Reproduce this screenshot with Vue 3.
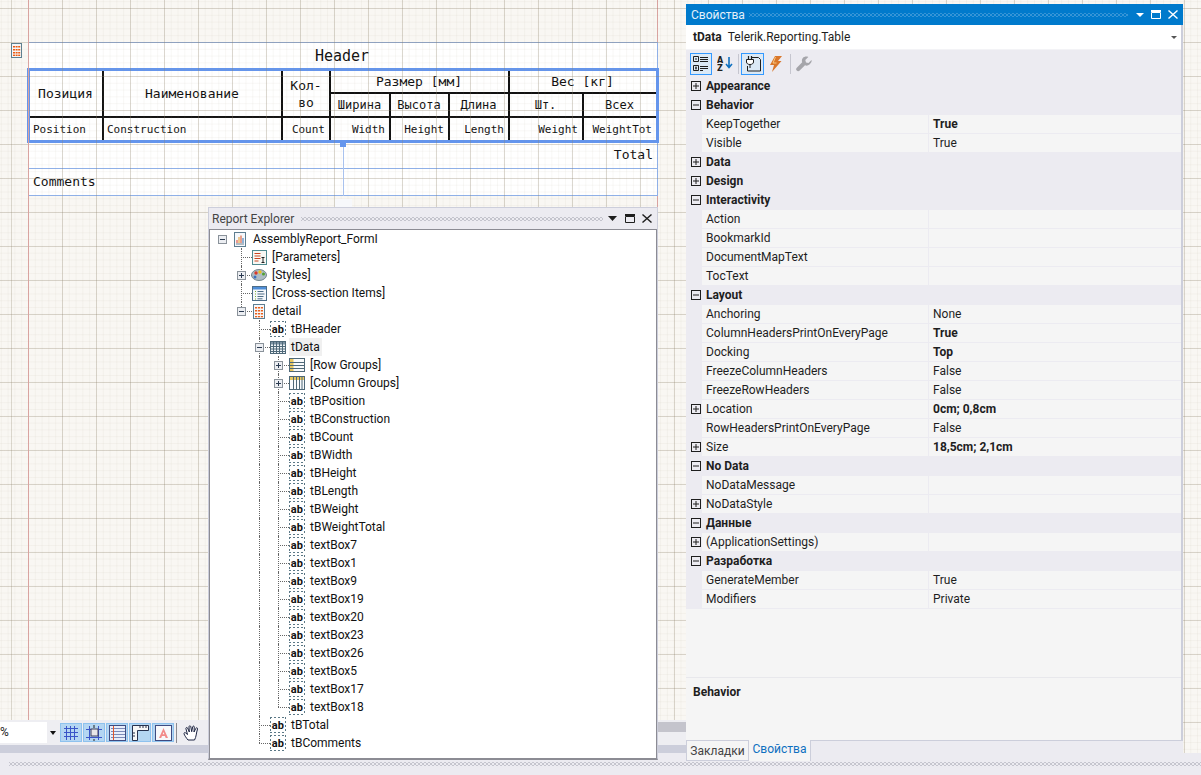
<script setup>
const names = ['tBPosition','tBConstruction','tBCount','tBWidth','tBHeight','tBLength','tBWeight','tBWeightTotal','textBox7','textBox1','textBox9','textBox19','textBox20','textBox23','textBox26','textBox5','textBox17','textBox18']
const base = [
  { label: 'AssemblyReport_FormI', level: 0, box: '-', icon: 'report' },
  { label: '[Parameters]', level: 1, icon: 'params' },
  { label: '[Styles]', level: 1, box: '+', icon: 'palette' },
  { label: '[Cross-section Items]', level: 1, icon: 'cross' },
  { label: 'detail', level: 1, box: '-', icon: 'detail' },
  { label: 'tBHeader', level: 2, icon: 'ab' },
  { label: 'tData', level: 2, box: '-', icon: 'table', hover: true },
  { label: '[Row Groups]', level: 3, box: '+', icon: 'rows' },
  { label: '[Column Groups]', level: 3, box: '+', icon: 'cols' },
  ...names.map(label => ({ label, level: 3, icon: 'ab' })),
  { label: 'tBTotal', level: 2, icon: 'ab' },
  { label: 'tBComments', level: 2, icon: 'ab' }
]
const railX = [12, 31, 49, 68]
const iconOffset = [12, 10, 11, 11]
const labelOffset = [29, 29, 30, 30]
const spans = [{ l: 1, from: 1, to: 4 }, { l: 2, from: 5, to: 28 }, { l: 3, from: 7, to: 26 }]
const tree = base.map((n, i) => ({
  ...n,
  rails: spans.filter(s => i >= s.from && i <= s.to).map(s => ({ x: railX[s.l], half: i === s.to }))
}))

const props = [
  { t: 'cat', n: 'Appearance', box: '+' },
  { t: 'cat', n: 'Behavior', box: '-' },
  { n: 'KeepTogether', v: 'True', b: true },
  { n: 'Visible', v: 'True' },
  { t: 'cat', n: 'Data', box: '+' },
  { t: 'cat', n: 'Design', box: '+' },
  { t: 'cat', n: 'Interactivity', box: '-' },
  { n: 'Action', v: '' },
  { n: 'BookmarkId', v: '' },
  { n: 'DocumentMapText', v: '' },
  { n: 'TocText', v: '' },
  { t: 'cat', n: 'Layout', box: '-' },
  { n: 'Anchoring', v: 'None' },
  { n: 'ColumnHeadersPrintOnEveryPage', v: 'True', b: true },
  { n: 'Docking', v: 'Top', b: true },
  { n: 'FreezeColumnHeaders', v: 'False' },
  { n: 'FreezeRowHeaders', v: 'False' },
  { n: 'Location', v: '0cm; 0,8cm', b: true, box: '+' },
  { n: 'RowHeadersPrintOnEveryPage', v: 'False' },
  { n: 'Size', v: '18,5cm; 2,1cm', b: true, box: '+' },
  { t: 'cat', n: 'No Data', box: '-' },
  { n: 'NoDataMessage', v: '' },
  { n: 'NoDataStyle', v: '', box: '+' },
  { t: 'cat', n: 'Данные', box: '-' },
  { n: '(ApplicationSettings)', v: '', box: '+' },
  { t: 'cat', n: 'Разработка', box: '-' },
  { n: 'GenerateMember', v: 'True' },
  { n: 'Modifiers', v: 'Private' }
]
</script>

<template>
  <div class="root">
    <div class="canvas">
      <div class="margin-line ml-right"></div>
      <div class="report">
        <div class="band band-header">Header</div>
        <div class="table-frame">
          <div class="table">
            <div class="c tall">Позиция</div>
            <div class="c tall">Наименование</div>
            <div class="c tall kol">Кол-во</div>
            <div class="c span3">Размер [мм]</div>
            <div class="c span2">Вес [кг]</div>
            <div class="c sub">Ширина</div>
            <div class="c sub">Высота</div>
            <div class="c sub">Длина</div>
            <div class="c sub">Шт.</div>
            <div class="c sub">Всех</div>
            <div class="c d left">Position</div>
            <div class="c d left">Construction</div>
            <div class="c d">Count</div>
            <div class="c d">Width</div>
            <div class="c d">Height</div>
            <div class="c d">Length</div>
            <div class="c d">Weight</div>
            <div class="c d">WeightTot</div>
          </div>
        </div>
        <div class="band band-total">Total</div>
        <div class="band band-comments">Comments</div>
      </div>

      <div class="grid-overlay"></div>
      <div class="margin-line ml-left"></div>
      <div class="tick"></div>

      <svg class="section-icon" width="11" height="15" viewBox="0 0 11 15">
        <rect x=".5" y=".5" width="10" height="14" fill="#f4f6f8" stroke="#5f7f8f" />
        <g fill="#ee5a10">
          <rect x="2" y="3" width="2" height="1.5" /><rect x="4.6" y="3" width="2" height="1.5" /><rect x="7.2" y="3" width="2" height="1.5" />
          <rect x="2" y="6" width="2" height="1.5" /><rect x="4.6" y="6" width="2" height="1.5" /><rect x="7.2" y="6" width="2" height="1.5" />
          <rect x="2" y="9" width="2" height="1.5" /><rect x="4.6" y="9" width="2" height="1.5" /><rect x="7.2" y="9" width="2" height="1.5" />
          <rect x="2" y="11.6" width="2" height="1.4" /><rect x="4.6" y="11.6" width="2" height="1.4" /><rect x="7.2" y="11.6" width="2" height="1.4" />
        </g>
      </svg>
      <div class="handle"></div>
      <div class="handle-line"></div>
      <div class="handle-foot"></div>

      <div class="bottom-tools">
        <div class="tools-row">
          <div class="zoom-box">%</div>
          <div class="zoom-arrow"><i></i></div>
          <div class="tool-group">
            <div class="tool">
              <svg width="16" height="16" viewBox="0 0 16 16" fill="none" stroke="#3a55c8"><path d="M3.5 1v14M7.5 1v14M11.5 1v14M1 3.5h14M1 7.5h14M1 11.5h14" /></svg>
            </div>
            <div class="tool">
              <svg width="18" height="18" viewBox="0 0 18 18" fill="none"><path d="M1 5.5h16M1 13.5h16M4.5 2v14M13.5 2v14" stroke="#3a55c8" /><rect x="6" y="5" width="7" height="7" fill="#e8e8e8" stroke="#3d3d5c" /><path d="M9 1v3M9 15v2" stroke="#222" /></svg>
            </div>
            <div class="tool">
              <svg width="17" height="16" viewBox="0 0 17 16" fill="none"><rect x=".5" y=".5" width="16" height="15" fill="#e9eefb" stroke="#3d4a80" /><path d="M2 3.5h14M2 6.5h14M2 9.5h14M2 12.5h14" stroke="#7c8ab8" /><path d="M4.5 1v14" stroke="#e2562b" /></svg>
            </div>
            <div class="tool">
              <svg width="17" height="16" viewBox="0 0 17 16" fill="none"><path d="M.5.500h16v5h-11v10h-5z" fill="#f6f6f6" stroke="#25304d" /><path d="M8 1v2M11 1v2M14 1v2M1 8h2M1 11h2" stroke="#25304d" /></svg>
            </div>
            <div class="tool">
              <svg width="17" height="16" viewBox="0 0 17 16"><rect x=".5" y=".5" width="16" height="15" fill="#f7f8fb" stroke="#3d4a80" /><path d="M8.5 3l4.500 10h-2.300l-.8-2H7l-.8 2H4zM7.700 9.300h1.700l-.9-2.200z" fill="#f28b8b" /></svg>
            </div>
          </div>
          <div class="tool-sep"></div>
          <svg class="hand" width="18" height="18" viewBox="0 0 18 18" fill="#fff" stroke="#1c2442" stroke-linejoin="round">
            <path d="M5 16c-1.500-1.800-3.600-4.700-4-6.200-.3-1 .9-1.500 1.600-.9L4.500 10.500 2.900 4.600c-.3-1.100 1.200-1.600 1.700-.6l1.700 4L6 2.700c0-1.200 1.600-1.200 1.800 0L8.700 7.700 9.700 2.800c.2-1.100 1.700-.9 1.600.3L11 8l1.900-3.700c.5-1 2-.4 1.600.7-.6 1.900-1 4.200-1.300 5.900-.3 1.600-.8 3.700-1.700 5.100z" />
          </svg>
        </div>
        <div class="tools-bar"></div>
      </div>
      <div class="scroll-rest"></div>
    </div>

    <div class="statusbar"><div class="grip-long"></div></div>

    <!-- Report Explorer window -->
    <section class="explorer">
      <header class="ex-title">
        <span class="ex-name">Report Explorer</span>
        <span class="grip grip-dark"></span>
        <svg class="tb-ic first" width="9" height="5" viewBox="0 0 9 5"><path d="M0 0h9L4.500 5z" fill="#1e1e1e" /></svg>
        <svg class="tb-ic" width="10" height="9" viewBox="0 0 10 9"><path d="M.5 2.500h9v6h-9z" fill="none" stroke="#1e1e1e" /><path d="M0 0h10v2H0z" fill="#1e1e1e" /></svg>
        <svg class="tb-ic last" width="10" height="9" viewBox="0 0 10 9"><path d="M.5.500l9 8M9.500.500l-9 8" stroke="#1e1e1e" stroke-width="1.400" /></svg>
      </header>
      <div class="tree">
        <div v-for="n in tree" :key="n.label" class="node">
          <i v-for="r in n.rails" :key="r.x" class="rail" :class="{ half: r.half }" :style="{ left: r.x + 'px' }"></i>
          <i v-if="n.level" class="hline" :style="{ left: railX[n.level] + 'px' }"></i>
          <span v-if="n.box" class="tbox" :style="{ left: railX[n.level] - 4 + 'px' }">
            <svg width="9" height="9" viewBox="0 0 9 9"><rect x=".5" y=".5" width="8" height="8" fill="#eceef2" stroke="#8a929a" /><path :d="n.box === '+' ? 'M2 4.500h5M4.500 2v5' : 'M2 4.500h5'" stroke="#2a3a50" /></svg>
          </span>
          <span class="ic" :class="{ 'ic-root': n.level === 0 }" :style="{ left: railX[n.level] + iconOffset[n.level] + 'px' }">
            <span v-if="n.icon === 'ab'" class="ab">ab</span>
            <svg v-else-if="n.icon === 'report'" width="12" height="15" viewBox="0 0 12 15"><rect x=".5" y=".5" width="11" height="14" fill="#f6f8fb" stroke="#5d7d90" /><path d="M3 11V8" stroke="#e03c2c" /><path d="M5 11V5" stroke="#e89a20" /><path d="M7 11V3.500" stroke="#d84a20" /><path d="M9 11V6" stroke="#2b6fb8" /><path d="M2 12h8" stroke="#6a7f90" /></svg>
            <svg v-else-if="n.icon === 'params'" width="15" height="15" viewBox="0 0 15 15"><rect x=".5" y=".5" width="14" height="14" fill="#f8f8f4" stroke="#4f8a90" /><path d="M2.500 3.500h6M2.500 6h6M2.500 8.500h6M2.500 11h4" stroke="#c8441e" /><path d="M9.500 7.500h3M11 7.500v5M9.500 12.500h3" stroke="#222" /></svg>
            <svg v-else-if="n.icon === 'palette'" width="16" height="14" viewBox="0 0 16 14"><ellipse cx="8" cy="7" rx="7.500" ry="5.500" fill="#aebcc4" stroke="#74868e" /><circle cx="5" cy="5" r="1.700" fill="#d83a2a" /><circle cx="9" cy="4" r="1.700" fill="#e8c020" /><circle cx="12.500" cy="6" r="1.500" fill="#50a030" /><circle cx="4" cy="9" r="1.500" fill="#3a70c0" /></svg>
            <svg v-else-if="n.icon === 'cross'" width="15" height="15" viewBox="0 0 15 15"><rect x=".5" y=".5" width="14" height="14" fill="#f5f8fc" stroke="#4e6e88" /><rect x="1" y="1" width="13" height="2.500" fill="#4f8ed8" /><path d="M3 5.500h1M3 8h1M3 10.500h1M3 13h1" stroke="#7ab030" /><path d="M5.500 5.500h6M5.500 8h7M5.500 10.500h6M5.500 12.800h5" stroke="#4e6e88" /></svg>
            <svg v-else-if="n.icon === 'detail'" width="12" height="15" viewBox="0 0 12 15"><rect x=".5" y=".5" width="11" height="14" fill="#f6f8fb" stroke="#5d7d90" /><g fill="#e8601c"><rect x="2" y="3" width="2.200" height="1.500" /><rect x="5" y="3" width="2.200" height="1.500" /><rect x="8" y="3" width="2" height="1.500" /><rect x="2" y="6" width="2.200" height="1.500" /><rect x="5" y="6" width="2.200" height="1.500" /><rect x="8" y="6" width="2" height="1.500" /><rect x="2" y="9" width="2.200" height="1.500" /><rect x="5" y="9" width="2.200" height="1.500" /><rect x="8" y="9" width="2" height="1.500" /><rect x="2" y="12" width="2.200" height="1.300" /><rect x="5" y="12" width="2.200" height="1.300" /><rect x="8" y="12" width="2" height="1.300" /></g></svg>
            <svg v-else-if="n.icon === 'table'" width="16" height="13" viewBox="0 0 16 13"><rect x=".5" y=".5" width="15" height="12" fill="#eef3f6" stroke="#4e6878" /><rect x="1" y="1" width="14" height="2.500" fill="#7d93a3" /><path d="M3.500 1v11M6.500 1v11M9.500 1v11M12.500 1v11M1 5.500h14M1 8h14M1 10.500h14" stroke="#4e6878" /></svg>
            <svg v-else-if="n.icon === 'rows'" width="16" height="14" viewBox="0 0 16 14"><rect x=".5" y=".5" width="15" height="13" fill="#f8fafc" stroke="#4e6878" /><rect x="1" y="1" width="3.500" height="12" fill="#e8c860" /><path d="M1 4.500h14M1 7.500h14M1 10.500h14" stroke="#4e6878" /></svg>
            <svg v-else-if="n.icon === 'cols'" width="16" height="14" viewBox="0 0 16 14"><rect x=".5" y=".5" width="15" height="13" fill="#f8fafc" stroke="#4e6878" /><rect x="1" y="1" width="14" height="3" fill="#e8c860" /><path d="M4.500 1v12M7.500 1v12M10.500 1v12M13 1v12" stroke="#4e6878" /></svg>
          </span>
          <span class="nlabel" :class="{ hover: n.hover }" :style="{ left: railX[n.level] + labelOffset[n.level] + 'px' }">{{ n.label }}</span>
        </div>
      </div>
    </section>

    <!-- Properties window -->
    <section class="props">
      <header class="p-title">
        <span class="p-name">Свойства</span>
        <span class="grip grip-light"></span>
        <svg class="tb-ic" width="8" height="4" viewBox="0 0 8 4"><path d="M0 0h8L4 4z" fill="#fff" /></svg>
        <svg class="tb-ic" width="10" height="9" viewBox="0 0 10 9"><path d="M.5 2.500h9v6h-9z" fill="none" stroke="#fff" /><path d="M0 0h10v2H0z" fill="#fff" /></svg>
        <svg class="tb-ic last" width="10" height="9" viewBox="0 0 10 9"><path d="M.5.500l9 8M9.500.500l-9 8" stroke="#fff" stroke-width="1.400" /></svg>
      </header>
      <div class="p-combo">
        <b>tData</b><span class="p-type">Telerik.Reporting.Table</span>
        <i class="combo-arrow"></i>
      </div>
      <div class="p-tools">
        <div class="pt on w22">
          <svg width="16" height="16" viewBox="0 0 16 16" fill="none" stroke="#1e1e1e"><path d="M.5.500h5v5h-5zM.5 9.500h5v5h-5zM2 3h2M2 12h2M3 10.500v3M7 1.500h8M7 3.500h8M7 5.500h8M7 10.500h8M7 12.500h8M7 14.500h3" /></svg>
        </div>
        <div class="pt w18">
          <svg width="16" height="15" viewBox="0 0 16 15"><text x="0" y="7" class="az">A</text><text x="0" y="14.500" class="az">Z</text><path d="M12 1v10M9 8l3 3.500L15 8" fill="none" stroke="#0e70c0" stroke-width="1.600" /></svg>
        </div>
        <i class="psep"></i>
        <div class="pt on w24">
          <svg width="16" height="16" viewBox="0 0 16 16" fill="none" stroke="#1e1e1e"><path d="M7 1.500h6.500l2 2v11.500h-13V10" /><path d="M3.500 0v3M6.500 0v3" stroke-width="1.200" /><path d="M1.500 3.500h7v2.500c0 1.500-1.500 2.500-3.500 2.500s-3.500-1-3.500-2.500zM5 8.500V12" fill="#fff" /></svg>
        </div>
        <div class="pt w14">
          <svg width="13" height="16" viewBox="0 0 13 16"><path d="M6 0h7L9 5h3.500L3 16l2-7H1z" fill="#d9762a" /><path d="M6.500 1L4 7h3.500" fill="none" stroke="#f9c87f" /></svg>
        </div>
        <i class="psep sep2"></i>
        <div class="pt w16">
          <svg width="16" height="16" viewBox="0 0 16 16"><path d="M15.500 4l-3 3-2.500-.6L9.300 4l3-3c-2-.8-4.300-.3-5.500 1.100-1 1.200-1.200 2.800-.6 4.200L.8 11.700c-.9.900-.9 2 0 2.900.9.900 2 .8 2.900-.1L9 9.300c1.500.7 3.200.4 4.500-.8 1.400-1.200 2.600-3 2-4.500z" fill="#a5a5aa" /></svg>
        </div>
      </div>
      <div class="p-list">
        <div v-for="p in props" :key="p.n" class="row" :class="p.t === 'cat' ? 'cat' : 'prop'">
          <span v-if="p.box" class="pbox">
            <svg width="10" height="10" viewBox="0 0 10 10"><rect x=".5" y=".5" width="9" height="9" fill="none" stroke="#1e1e1e" /><path :d="p.box === '+' ? 'M2 5h6M5 2v6' : 'M2 5h6'" stroke="#1e1e1e" /></svg>
          </span>
          <span class="pname">{{ p.n }}</span>
          <span v-if="p.t !== 'cat'" class="pval" :class="{ bold: p.b }">{{ p.v }}</span>
        </div>
      </div>
      <div class="p-desc"><b>Behavior</b></div>
      <div class="p-tabs">
        <span class="tab">Закладки</span>
        <span class="tab active">Свойства</span>
        <span class="tab-fill"></span>
      </div>
    </section>
  </div>
</template>

<style>
html, body { margin: 0; padding: 0; overflow: hidden; }
</style>

<style scoped>
.root {
  position: relative;
  width: 1201px;
  height: 775px;
  overflow: hidden;
  background: #ecebf1;
  font-family: Roboto, "Noto Sans", sans-serif;
  font-size: 12px;
  color: #1e1e1e;
}

/* design surface */
.canvas {
  position: relative;
  height: 753px;
  background: #f9f7f3;
  overflow: hidden;
}
.grid-overlay {
  position: absolute;
  inset: 0;
  pointer-events: none;
  background-image:
    linear-gradient(to right, rgba(140, 128, 105, .28) 1px, transparent 1px),
    linear-gradient(to bottom, rgba(140, 128, 105, .28) 1px, transparent 1px),
    linear-gradient(to right, rgba(160, 150, 125, .07) 1px, transparent 1px),
    linear-gradient(to bottom, rgba(160, 150, 125, .07) 1px, transparent 1px);
  background-size: 34px 34px, 34px 34px, 6.8px 6.8px, 6.8px 6.8px;
  background-position: 28px 0, 0 8px, 28px 0, 0 8px;
}
.tick {
  position: absolute;
  left: 11px;
  top: 0;
  bottom: 0;
  width: 1px;
  background: rgba(140, 128, 105, .28);
}
.margin-line {
  position: absolute;
  width: 1px;
  background: #d9a3a0;
  top: 0;
}
.ml-left { left: 28px; height: 720px; }
.ml-right { left: 657px; height: 207px; }

.report {
  position: absolute;
  left: 28px;
  top: 42px;
  width: 630px;
  background: #fff;
  font-family: "DejaVu Sans Mono", monospace;
  color: #111;
  display: flex;
  flex-direction: column;
}
.band {
  border-top: 1px solid #8fb0e8;
  box-sizing: border-box;
  display: flex;
  align-items: center;
  font-size: 13px;
  border-left: 1px solid #8fb0e8;
  border-right: 1px solid #8fb0e8;
}
.band-header { height: 26px; justify-content: center; font-size: 15px; padding-right: 2px; }
.band-total { height: 25px; border-top: 0; justify-content: flex-end; padding: 0 4px 3px 0; }
.band-comments { height: 28px; padding: 0 0 1px 4px; border-bottom: 1px solid #8fb0e8; }
.table-frame {
  box-sizing: border-box;
  width: 632px;
  margin-left: -1px;
  border: 3px solid #6495ed;
  height: 75px;
}
.table {
  display: grid;
  grid-template-columns: 72px 177px 46px 58px 57px 58px 72px 72px;
  grid-template-rows: 21px 22px 22px;
  gap: 2px;
  background: #111;
  height: 69px;
  width: 626px;
  font-size: 13px;
}
.c {
  background: #fff;
  display: flex;
  align-items: center;
  justify-content: center;
  text-align: center;
  padding-right: 1px;
}
.tall { grid-row: span 2; }
.span3 { grid-column: span 3; }
.span2 { grid-column: span 2; }
.sub { font-size: 12px; }
.kol { line-height: 17px; padding-right: 0; }
.d { font-size: 11px; justify-content: flex-end; padding-right: 4px; }
.left { justify-content: flex-start; padding: 0 0 0 3px; }

.section-icon { position: absolute; left: 11px; top: 43px; }
.handle { position: absolute; left: 340px; top: 142px; width: 6px; height: 5px; background: #6495ed; }
.handle-line { position: absolute; left: 343px; top: 147px; width: 1px; height: 49px; background: #a9c2ee; }
.handle-foot { position: absolute; left: 335px; top: 199px; width: 17px; height: 8px; background: #f7f8fb; }

/* bottom toolbar */
.bottom-tools {
  position: absolute;
  left: 0;
  bottom: 0;
  width: 686px;
  height: 33px;
  background: #eeeef2;
  display: flex;
  flex-direction: column;
}
.tools-row { height: 25px; display: flex; align-items: center; }
.tools-bar { height: 8px; background: #cccedb; }
.zoom-box {
  width: 47px;
  height: 21px;
  background: #fff;
  box-sizing: border-box;
  line-height: 21px;
  font-size: 12px;
  color: #1e1e1e;
}
.zoom-arrow { width: 12px; height: 21px; display: flex; align-items: center; justify-content: center; }
.zoom-arrow i { border: 3.500px solid transparent; border-top: 4px solid #111; border-bottom: 0; }
.tool-group { display: flex; gap: 1px; margin-left: 1px; }
.tool {
  width: 22px;
  height: 19px;
  box-sizing: border-box;
  background: #b4d6f2;
  border: 1px solid #8ec2ee;
  display: flex;
  align-items: center;
  justify-content: center;
}
.tool svg { flex: none; }
.tool-sep { width: 1px; height: 20px; background: #8a8a90; margin-left: 2px; }
.hand { margin-left: 6px; }
.scroll-rest {
  position: absolute;
  left: 658px;
  top: 722px;
  width: 28px;
  height: 10px;
  background: #c4c4cc;
}

/* status strip */
.statusbar { height: 22px; position: relative; }
.grip-long {
  position: absolute;
  left: 9px;
  right: 0;
  top: 9px;
  height: 4px;
  background-image:
    radial-gradient(circle, #c2c2cc .7px, transparent .8px),
    radial-gradient(circle, #c2c2cc .7px, transparent .8px);
  background-size: 4px 4px;
  background-position: 0 0, 2px 2px;
}

/* floating windows */
.explorer {
  position: absolute;
  left: 208px;
  top: 207px;
  width: 450px;
  height: 553px;
  display: flex;
  flex-direction: column;
  background: #ecebf1;
  box-sizing: border-box;
  border: 1px solid #cccedb;
  border-bottom: 2px solid #8c8c94;
}
.ex-title {
  height: 21px;
  flex: none;
  display: flex;
  align-items: center;
  padding-left: 3px;
}
.ex-name { color: #444; width: 89px; }
.grip { flex: 1; height: 4px; background-size: 4px 4px; background-position: 0 0, 2px 2px; }
.grip-dark {
  margin-right: 5px;
  background-image:
    radial-gradient(circle, #c0c0ca .7px, transparent .8px),
    radial-gradient(circle, #c0c0ca .7px, transparent .8px);
}
.grip-light {
  margin-right: 8px;
  background-image:
    radial-gradient(circle, #3a96d8 .7px, transparent .8px),
    radial-gradient(circle, #3a96d8 .7px, transparent .8px);
}
.tb-ic { flex: none; margin-right: 7px; }
.tb-ic.first { margin-right: 8px; }
.tb-ic.last { margin-right: 5px; }
.tree {
  flex: 1;
  background: #fff;
  border: 1px solid #8c8c94;
  border-bottom: 0;
}
.node { position: relative; height: 18px; }
.rail {
  position: absolute;
  top: 0;
  bottom: 0;
  width: 0;
  border-left: 1px dotted #666;
}
.rail.half { bottom: 9px; }
.hline {
  position: absolute;
  top: 9px;
  width: 11px;
  height: 0;
  border-top: 1px dotted #666;
}
.tbox { position: absolute; top: 5px; height: 9px; width: 9px; display: block; line-height: 0; }
.ic {
  position: absolute;
  top: 1px;
  width: 16px;
  height: 16px;
  display: flex;
  align-items: center;
  justify-content: center;
}
.ic-root { width: 12px; }
.ic svg { flex: none; }
.ab {
  box-sizing: border-box;
  width: 16px;
  height: 16px;
  background-color: #fff;
  background-image:
    repeating-linear-gradient(to right, #5b7886 0 2px, transparent 2px 4px),
    repeating-linear-gradient(to right, #5b7886 0 2px, transparent 2px 4px),
    repeating-linear-gradient(to bottom, #5b7886 0 2px, transparent 2px 4px),
    repeating-linear-gradient(to bottom, #5b7886 0 2px, transparent 2px 4px);
  background-size: 100% 1px, 100% 1px, 1px 100%, 1px 100%;
  background-position: 0 0, 0 100%, 0 0, 100% 0;
  background-repeat: no-repeat;
  font: 700 11px/17px Roboto, sans-serif;
  letter-spacing: .2px;
  text-align: center;
  color: #111;
}
.az { font: bold 8px "DejaVu Sans", sans-serif; fill: #1e1e1e; }
.nlabel {
  position: absolute;
  top: 0;
  line-height: 18px;
  white-space: nowrap;
  color: #111;
  padding: 0 2px;
}
.nlabel.hover { background: #f0f0f0; }

.props {
  position: absolute;
  left: 686px;
  top: 4px;
  width: 497px;
  height: 757px;
  display: flex;
  flex-direction: column;
  background: #f5f5f5;
  box-sizing: border-box;
  border-right: 2px solid #cccedb;
}
.p-title {
  flex: none;
  margin-right: -2px;
  height: 21px;
  background: #007acc;
  display: flex;
  align-items: center;
  padding-left: 5px;
  color: #e4f0f9;
}
.p-name { width: 58px; }
.p-combo {
  flex: none;
  height: 24px;
  background: #fff;
  display: flex;
  align-items: center;
  padding-left: 7px;
  position: relative;
}
.p-type { margin-left: 6px; }
.combo-arrow {
  position: absolute;
  right: 4px;
  top: 11px;
  border: 3px solid transparent;
  border-top: 3px solid #555;
  border-bottom: 0;
}
.p-tools {
  flex: none;
  height: 28px;
  background: #ecebf1;
  display: flex;
  align-items: center;
  padding-left: 4px;
  box-sizing: border-box;
  border-top: 1px solid #f3f3f6;
}
.pt { height: 22px; display: flex; align-items: center; justify-content: center; box-sizing: border-box; flex: none; }
.pt.on { background: #dbe9f6; border: 1px solid #3399ff; }
.w22 { width: 22px; }
.w18 { width: 20px; margin-left: 3px; }
.w24 { width: 23px; }
.w14 { width: 14px; margin-left: 4px; }
.w16 { width: 16px; margin-left: 5px; }
.psep { width: 1px; height: 20px; background: #c6c6cf; margin: 0 2px 0 3px; flex: none; }
.sep2 { margin: 0 0 0 8px; }

.p-list { flex: none; display: flex; flex-direction: column; }
.row {
  position: relative;
  height: 19px;
  display: flex;
  align-items: center;
  box-sizing: border-box;
  line-height: 18px;
  white-space: nowrap;
}
.cat { background: #ecebf1; font-weight: 700; }
.prop {
  background: linear-gradient(to right, #ecebf1 16px, #f5f5f5 16px);
  border-bottom: 1px solid #ecebf1;
}
.pbox { position: absolute; left: 5px; top: 4px; line-height: 0; }
.pname { margin-left: 20px; width: 222px; flex: none; box-sizing: border-box; height: 100%; }
.pval { padding-left: 4px; border-left: 1px solid #ecebf1; height: 100%; flex: 1; }
.bold { font-weight: 700; }
.p-desc {
  margin-top: 68px;
  flex: none;
  height: 63px;
  padding: 7px 7px;
  box-sizing: border-box;
  border-top: 1px solid #e8e8ec;
}
.p-tabs { flex: none; display: flex; height: 21px; margin-right: -2px; }
.tab {
  box-sizing: border-box;
  height: 21px;
  width: 63px;
  line-height: 21px;
  text-align: center;
  color: #444;
  border: 1px solid #cccedb;
  background: #f5f5f5;
}
.tab.active { color: #0e70c0; width: 62px; border-width: 0 1px 0 0; line-height: 19px; }
.tab-fill { flex: 1; border-top: 1px solid #cccedb; background: #ecebf1; }
</style>
